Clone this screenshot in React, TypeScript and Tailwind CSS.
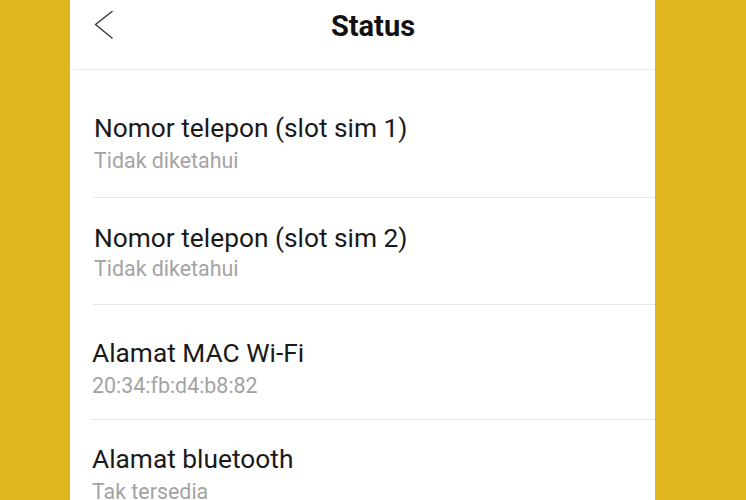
const rows = [
  { title: 'Nomor telepon (slot sim 1)', value: 'Tidak diketahui', pad: 'pt-[43px] pb-[24px] pl-[24px]', line: 'ml-[23px]', gap: 'mt-[6px]' },
  { title: 'Nomor telepon (slot sim 2)', value: 'Tidak diketahui', pad: 'pt-[25px] pb-[23px] pl-[24px]', line: 'ml-[23px]', gap: 'mt-[4px]' },
  { title: 'Alamat MAC Wi-Fi', value: '20:34:fb:d4:b8:82', pad: 'pt-[33px] pb-[21px] pl-[22px]', line: 'ml-[22px]', gap: 'mt-[6px]' },
  { title: 'Alamat bluetooth', value: 'Tak tersedia', pad: 'pt-[24px] pb-[24px] pl-[22px]', line: '', gap: 'mt-[6px]' },
];

const App = () => {
  return (
    <div className="flex h-[500px] w-[746px] overflow-hidden bg-[#e0b61e] font-['Roboto',sans-serif]">
      <div className="ml-[70px] flex w-[585px] flex-col bg-white">
        {/* Header */}
        <div className="relative flex h-[70px] shrink-0 justify-center border-b border-[#ececec] pl-[21px] pt-[9px]">
          <svg
            className="absolute left-[23px] top-[10px]"
            width="22"
            height="30"
            viewBox="0 0 22 30"
            fill="none"
          >
            <path d="M19 1.5 L2.5 14.5 L19 28" stroke="#3a3a3a" strokeWidth="1.5" strokeLinecap="round" strokeLinejoin="round" />
          </svg>
          <span className="text-[29px] font-bold leading-[34px] text-[#111]">Status</span>
        </div>

        {/* Rows */}
        {rows.map((row) => (
          <div key={row.title}>
            <div className={row.pad}>
              <div className="text-[26.3px] leading-[30px] text-[#1a1a1a]">{row.title}</div>
              <div className={`${row.gap} text-[21.4px] leading-[24px] text-[#a3a3a3]`}>{row.value}</div>
            </div>
            {row.line && <div className={`${row.line} h-px bg-[#e6e6e6]`} />}
          </div>
        ))}
      </div>
    </div>
  );
};

export default App;
